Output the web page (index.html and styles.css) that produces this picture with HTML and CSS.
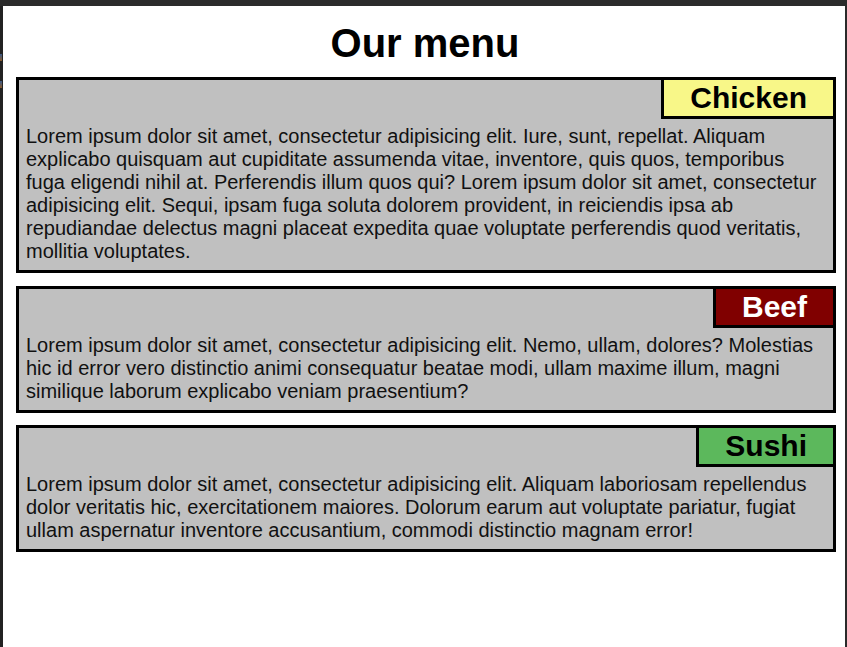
FILE: index.html
```html
<!DOCTYPE html>
<html lang="en">
<head>
<meta charset="utf-8">
<title>Our menu</title>
<link rel="stylesheet" href="styles.css">
</head>
<body>
<div class="topbar"></div>
<div class="window">
  <div class="gutter">
    <span class="mark mark-1"></span>
    <span class="mark mark-2"></span>
  </div>
  <main class="page">
    <h1 class="title">Our menu</h1>
    <section class="card">
      <div class="label-row"><h2 class="label label-chicken">Chicken</h2></div>
      <p class="text">Lorem ipsum dolor sit amet, consectetur adipisicing elit. Iure, sunt, repellat. Aliquam explicabo quisquam aut cupiditate assumenda vitae, inventore, quis quos, temporibus fuga eligendi nihil at. Perferendis illum quos qui? Lorem ipsum dolor sit amet, consectetur adipisicing elit. Sequi, ipsam fuga soluta dolorem provident, in reiciendis ipsa ab repudiandae delectus magni placeat expedita quae voluptate perferendis quod veritatis, mollitia voluptates.</p>
    </section>
    <section class="card">
      <div class="label-row"><h2 class="label label-beef">Beef</h2></div>
      <p class="text">Lorem ipsum dolor sit amet, consectetur adipisicing elit. Nemo, ullam, dolores? Molestias hic id error vero distinctio animi consequatur beatae modi, ullam maxime illum, magni similique laborum explicabo veniam praesentium?</p>
    </section>
    <section class="card">
      <div class="label-row"><h2 class="label label-sushi">Sushi</h2></div>
      <p class="text">Lorem ipsum dolor sit amet, consectetur adipisicing elit. Aliquam laboriosam repellendus dolor veritatis hic, exercitationem maiores. Dolorum earum aut voluptate pariatur, fugiat ullam aspernatur inventore accusantium, commodi distinctio magnam error!</p>
    </section>
  </main>
  <div class="edge"></div>
</div>
</body>
</html>
```

FILE: styles.css
```css
html, body {
  margin: 0;
  padding: 0;
  height: 100%;
}
body {
  background: #2a2a2a;
  font-family: "Liberation Sans", Arial, sans-serif;
  color: #000;
  display: flex;
  flex-direction: column;
  overflow: hidden;
}
.topbar {
  height: 6px;
  background: #2b2b2b;
  flex: none;
}
.window {
  flex: 1;
  display: flex;
}
.gutter {
  width: 3px;
  background: #222222;
  display: flex;
  flex-direction: column;
  padding-top: 48px;
  gap: 20px;
}
.mark {
  display: block;
  width: 2px;
  height: 7px;
  background: linear-gradient(#3a5a8a, #8a5a2a);
}
.page {
  flex: 1;
  background: #ffffff;
  padding: 0 8px 0 13px;
}
.edge {
  width: 2px;
  background: #2a2a2a;
  border-left: 1px solid #ffffff;
}
.title {
  margin: 14px 0 11px;
  font-size: 40px;
  line-height: 46px;
  font-weight: bold;
  text-align: center;
  padding-right: 2px;
}
.card {
  border: 3px solid #000;
  background: #c0c0c0;
  margin-bottom: 12.5px;
}
.label-row {
  display: flex;
  justify-content: flex-end;
}
.label {
  margin: 0;
  font-size: 30px;
  line-height: 36px;
  font-weight: bold;
  padding: 0 26px;
  border-left: 3px solid #000;
  border-bottom: 3px solid #000;
}
.label-chicken {
  background: #f8f788;
  color: #000;
}
.label-beef {
  background: #800000;
  color: #fff;
}
.label-sushi {
  background: #5cb85c;
  color: #000;
}
.text {
  margin: 0;
  padding: 6px 7px 7px;
  font-size: 20px;
  line-height: 23px;
  color: #111;
}
```
